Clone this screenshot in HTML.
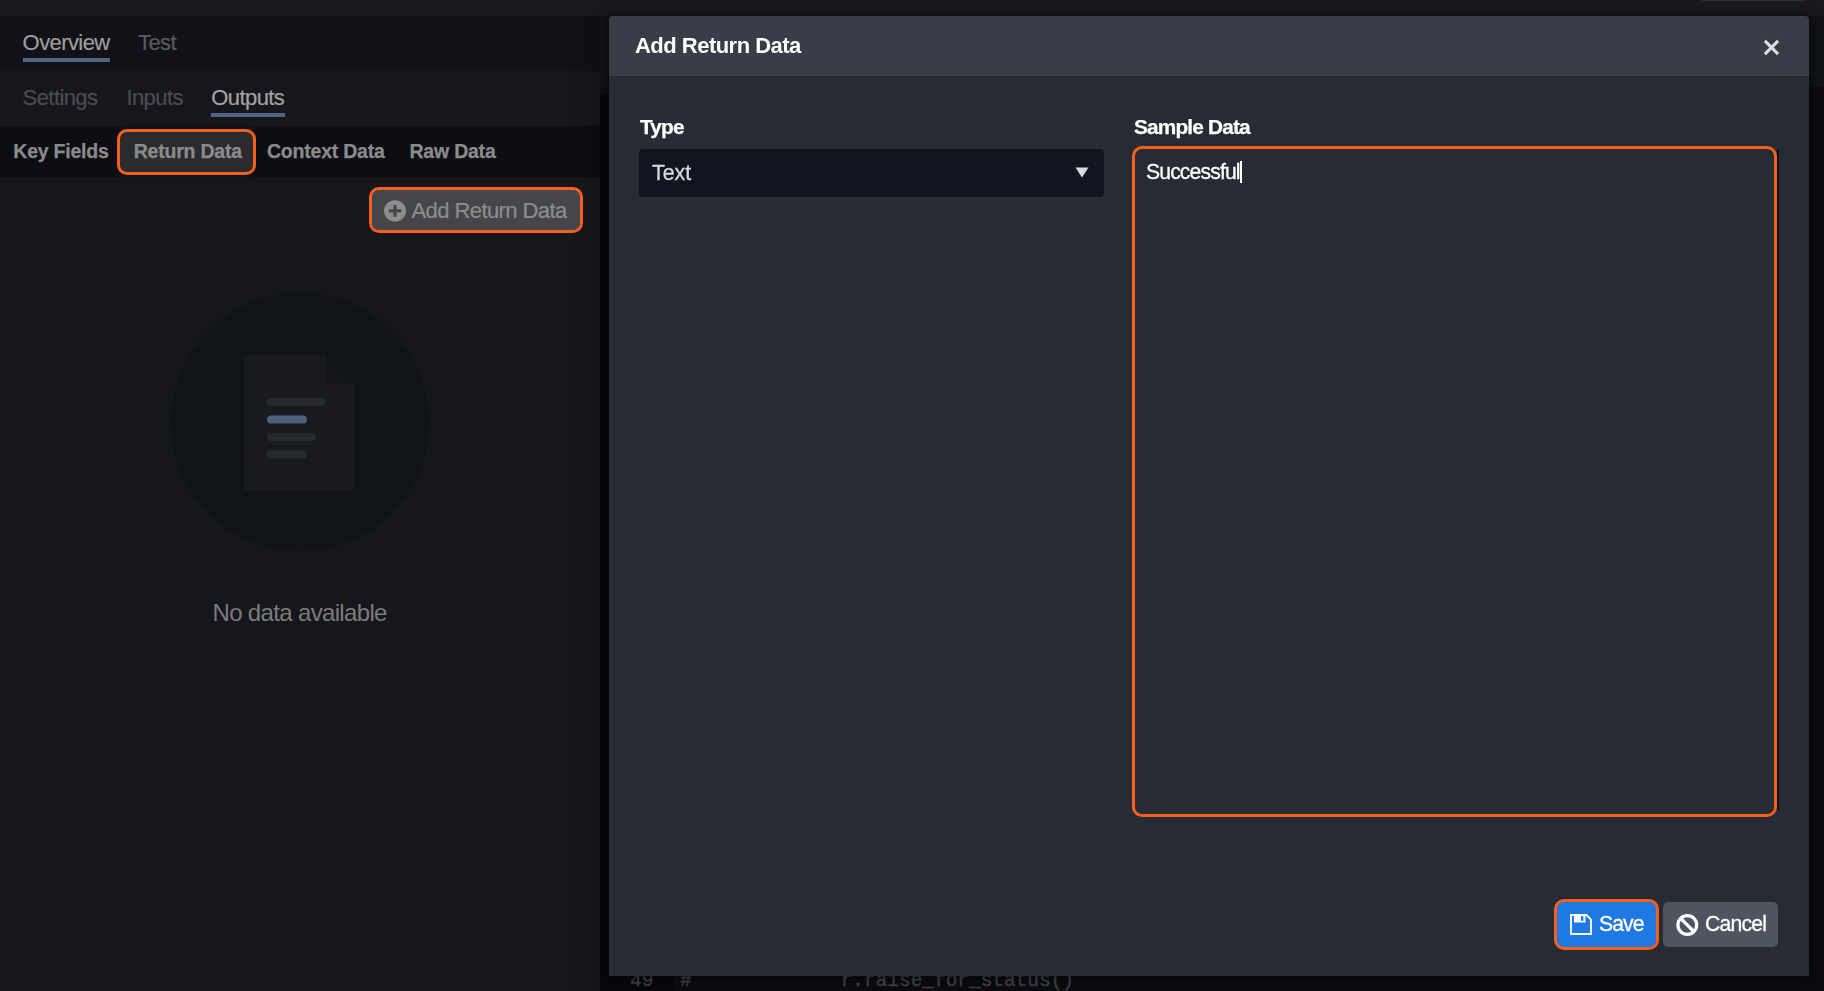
<!DOCTYPE html>
<html lang="en">
<head>
<meta charset="utf-8">
<title>Add Return Data</title>
<style>
html,body{margin:0;padding:0;}
body{width:1824px;height:991px;overflow:hidden;position:relative;background:#16171c;font-family:"Liberation Sans",Arial,sans-serif;}
.abs{position:absolute;}
.t{position:absolute;white-space:nowrap;line-height:1;margin:0;padding:0;}
.hl{position:absolute;border:3px solid #f75f1f;border-radius:10px;box-sizing:border-box;}

/* background regions */
#topbar{left:0;top:0;width:1824px;height:16px;background:#18191e;}
#band1{left:0;top:16px;width:1824px;height:55px;background:#101217;}
#band1r{left:600px;top:71px;width:1224px;height:16px;background:#101217;}
#band1s{left:600px;top:87px;width:9px;height:7px;background:#0e0f13;}
#editor{left:600px;top:87px;width:1224px;height:904px;background:#0a0b0e;}
#band3{left:0;top:126px;width:600px;height:51px;background:#0d0e13;}
#gutter{left:600px;top:94px;width:74px;height:897px;background:#06070a;}

/* left panel text */
.tab1{font-size:22px;letter-spacing:-0.58px;-webkit-text-stroke:0.2px currentColor;}
.ul{position:absolute;height:4px;background:#4f6585;}
.kf{font-size:19.5px;font-weight:bold;color:#8b8b8b;letter-spacing:-0.22px;-webkit-text-stroke:0.25px #8b8b8b;}

.mono{font-family:'Liberation Mono','DejaVu Sans Mono',monospace;font-size:19.45px;color:#3d3e41;-webkit-text-stroke:0.4px #3d3e41;}
/* modal */
#modal{left:609px;top:16px;width:1200px;height:960px;background:#262b34;border-radius:4px 4px 0 0;box-shadow:0 0 9px 1px rgba(0,0,0,0.5);will-change:transform;}
#mhead{left:0;top:0;width:1200px;height:60px;background:#393d48;border-radius:4px 4px 0 0;}
.m{color:#fff;font-size:21.2px;letter-spacing:-0.95px;-webkit-text-stroke:0.3px #fff;}
.lb{color:#fff;font-size:20.8px;font-weight:bold;letter-spacing:-0.82px;-webkit-text-stroke:0.25px #fff;}
</style>
</head>
<body>
<div class="abs" id="topbar"></div>
<div class="abs" id="band1"></div>
<div class="abs" id="band1r"></div>
<div class="abs" id="editor"></div>
<div class="abs" id="band1s"></div>
<div class="abs" id="gutter"></div>
<div class="abs" id="band3"></div>
<div class="abs" style="left:568px;top:16px;width:32px;height:975px;background:linear-gradient(to right,rgba(0,0,0,0),rgba(0,0,0,0.16));"></div>
<div class="abs" style="left:1702px;top:0;width:104px;height:1px;background:#2a2d36;"></div>

<!-- code editor line peeking below modal -->
<div class="t mono" id="ln" style="left:630px;top:972px;">49</div>
<div class="t mono" id="hash" style="left:680px;top:972px;">#</div>
<div class="t mono" id="code" style="left:840.7px;top:972px;">r.raise_for_status()</div>

<!-- left panel: top tabs -->
<div class="t tab1" id="t_overview" style="left:22.6px;top:31.5px;color:#9e9e9e;">Overview</div>
<div class="ul" style="left:23px;top:58px;width:87px;"></div>
<div class="t tab1" id="t_test" style="left:138px;top:31.5px;color:#5a5a5b;">Test</div>

<div class="t tab1" id="t_settings" style="left:22.6px;top:86.5px;color:#4b4c4e;">Settings</div>
<div class="t tab1" id="t_inputs" style="left:126.4px;top:86.5px;color:#4b4c4e;">Inputs</div>
<div class="t tab1" id="t_outputs" style="left:211.3px;top:86.5px;color:#a3a3a3;">Outputs</div>
<div class="ul" style="left:211px;top:113px;width:74px;"></div>

<!-- key fields row -->
<div class="abs" style="left:121px;top:126px;width:133px;height:51px;background:#121318;"></div>
<div class="abs" style="left:119px;top:130px;width:135px;height:43px;background:#2b2b2f;border-radius:8px;"></div>
<div class="t kf" id="t_kf" style="left:13.3px;top:142px;">Key Fields</div>
<div class="t kf" id="t_rd" style="left:133.7px;top:142px;">Return Data</div>
<div class="t kf" id="t_cd" style="left:267px;top:142px;">Context Data</div>
<div class="t kf" id="t_raw" style="left:409.5px;top:142px;">Raw Data</div>
<div class="hl" style="left:117px;top:128.5px;width:139px;height:46.5px;"></div>

<!-- add return data button -->
<div class="abs" style="left:372px;top:190px;width:208px;height:40px;background:#45464b;border-radius:7px;"></div>
<svg class="abs" style="left:384px;top:199.5px;" width="22" height="22" viewBox="0 0 22 22"><ellipse cx="11" cy="10.85" rx="11" ry="10.7" fill="#8d8d8d"/><path d="M11 4.9v11.9M4.8 10.85h12.4" stroke="#45464b" stroke-width="3.2" fill="none"/></svg>
<div class="t tab1" id="t_add" style="left:411.5px;top:199.5px;color:#8d8d8d;">Add Return Data</div>
<div class="hl" style="left:369px;top:187px;width:214px;height:46px;"></div>

<!-- empty state -->
<div class="abs" style="left:170.5px;top:292.5px;width:258px;height:258px;border-radius:50%;background:#101318;"></div>
<svg class="abs" style="left:244px;top:355px;" width="111" height="135" viewBox="0 0 111 135">
  <path d="M2 0H81.5L111 29.5V133a2 2 0 0 1-2 2H2a2 2 0 0 1-2-2V2a2 2 0 0 1 2-2z" fill="#191a1f"/>
  <path d="M81.5 0L111 29.5H83.5a2 2 0 0 1-2-2z" fill="#14151a"/>
  <rect x="23" y="43" width="59" height="8" rx="4" fill="#26292e"/>
  <rect x="23" y="60.5" width="40" height="8" rx="4" fill="#4e627e"/>
  <rect x="23" y="78" width="49" height="8" rx="4" fill="#26292e"/>
  <rect x="23" y="95.5" width="39.5" height="8" rx="4" fill="#26292e"/>
</svg>
<div class="t" id="t_nodata" style="left:212.5px;top:601px;font-size:24px;letter-spacing:-0.66px;color:#7b7b7c;">No data available</div>

<!-- modal -->
<div class="abs" id="modal">
  <div class="abs" id="mhead"></div>
  <div class="t" id="t_title" style="left:26px;top:19px;font-size:22px;letter-spacing:-0.52px;font-weight:bold;color:#fff;">Add Return Data</div>
  <svg class="abs" style="left:1154px;top:23px;" width="17" height="17" viewBox="0 0 17 17"><path d="M1.9 1.9L15.1 15.1M15.1 1.9L1.9 15.1" stroke="#dcdee3" stroke-width="3" fill="none"/></svg>

  <div class="t lb" id="t_type" style="left:31px;top:100.5px;">Type</div>
  <div class="abs" style="left:30px;top:133px;width:465px;height:48px;background:#111520;border-radius:4px;"></div>
  <div class="t m" id="t_text" style="left:43px;top:147px;color:#d6d9df;font-size:21.33px;letter-spacing:0;-webkit-text-stroke:0.3px #d6d9df;">Text</div>
  <svg class="abs" style="left:466px;top:151px;" width="14" height="11" viewBox="0 0 14 11"><path d="M0.5 0.5H13.5L7 10.5z" fill="#d6d9df"/></svg>

  <div class="t lb" id="t_sample" style="left:525px;top:100.5px;">Sample Data</div>
  <div class="abs" style="left:1168px;top:133px;width:1.5px;height:661px;background:#0d1320;"></div>
  <div class="t m" id="t_succ" style="left:537px;top:145px;letter-spacing:-0.88px;">Successful</div>
  <div class="abs" style="left:631px;top:145px;width:2px;height:22px;background:#fff;"></div>
  <div class="hl" style="left:523px;top:130px;width:645px;height:671px;"></div>

  <!-- buttons -->
  <div class="abs" style="left:948px;top:886px;width:99px;height:45px;background:#2078e2;border-radius:6px;"></div>
  <svg class="abs" style="left:961px;top:898px;" width="22" height="21" viewBox="0 0 22 21">
    <path d="M1 1H16.5L21 5.5V20H1z" fill="none" stroke="#fff" stroke-width="1.8" stroke-linejoin="miter"/>
    <path d="M4 1.5H15.5V8.5H4z" fill="#fff"/>
    <rect x="11" y="2.2" width="2.4" height="4.6" fill="#2078e2"/>
  </svg>
  <div class="t m" id="t_save" style="left:990px;top:897px;">Save</div>
  <div class="hl" style="left:945px;top:883px;width:105px;height:51px;"></div>

  <div class="abs" style="left:1054px;top:886px;width:115px;height:45px;background:#4f5461;border-radius:5px;"></div>
  <svg class="abs" style="left:1067px;top:897.5px;" width="23" height="22" viewBox="0 0 23 22"><circle cx="11.3" cy="11" r="9.4" fill="none" stroke="#fff" stroke-width="3.2"/><path d="M4.8 4.5L17.8 17.5" stroke="#fff" stroke-width="3.2"/></svg>
  <div class="t m" id="t_cancel" style="left:1096px;top:897px;letter-spacing:-0.78px;">Cancel</div>
</div>
</body>
</html>
